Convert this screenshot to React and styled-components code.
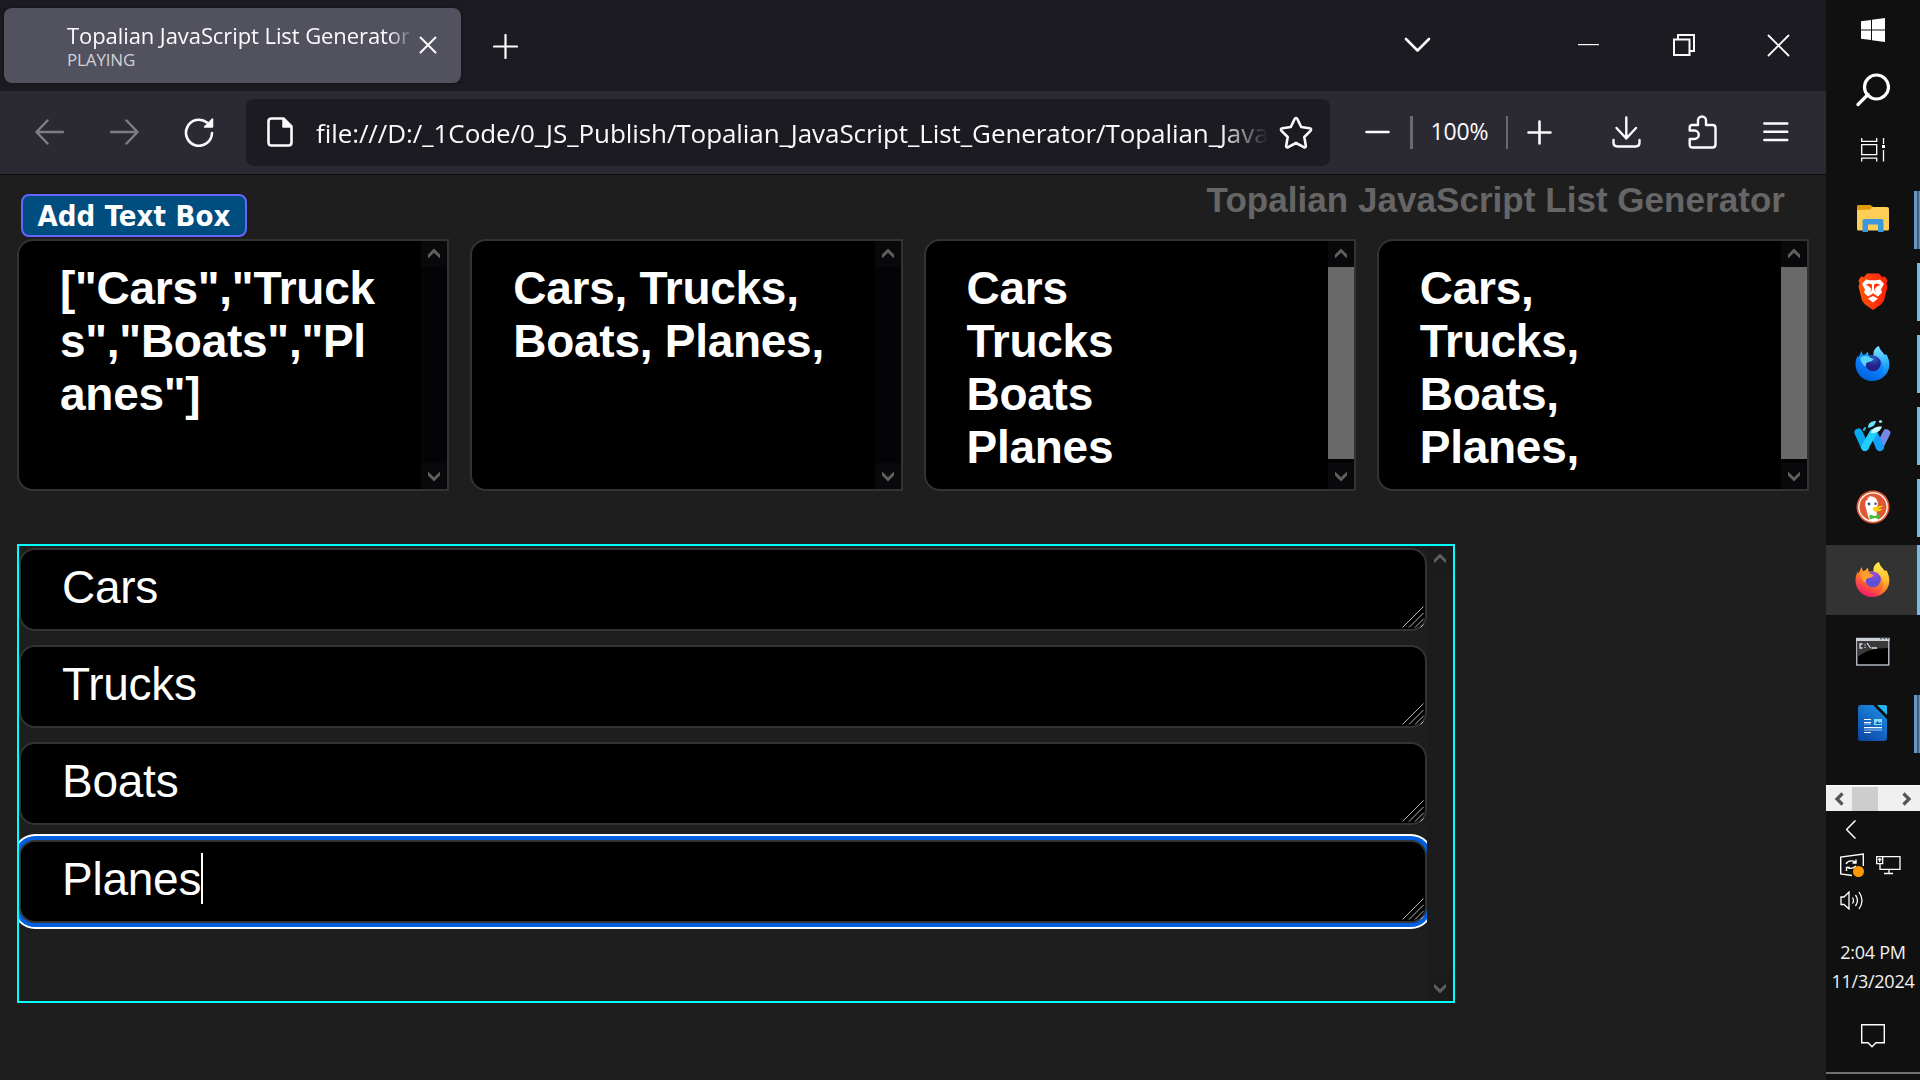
import React from "react";
import styled, { createGlobalStyle, css } from "styled-components";

const Global = createGlobalStyle`
  * { box-sizing: border-box; }
  body { margin: 0; background: #1e1e1e; overflow: hidden; }
  svg { display: block; flex: none; }
`;
const ui = `"Open Sans", "Noto Sans", sans-serif`;
const arial = `"Liberation Sans", Arial, sans-serif`;

const Screen = styled.div`display: flex; width: 1920px; height: 1080px; overflow: hidden; background: #1e1e1e;`;
const Browser = styled.div`width: 1826px; display: flex; flex-direction: column;`;

const TabStrip = styled.div`height: 91px; background: #1c1b22; display: flex; align-items: flex-start; padding: 8px 0 0 4px;`;
const Tab = styled.div`
  width: 457px; height: 75px; border-radius: 8px; background: #52525e; display: flex; padding-left: 63px;
  box-shadow: 0 0 4px rgba(0, 0, 0, 0.5);
`;
const TabLabels = styled.div`width: 347px; padding-top: 13px; overflow: hidden;`;
const TabTitle = styled.div`
  font: 22px/28px ${ui}; letter-spacing: -0.08px; color: #fbfbfe; white-space: nowrap;
  mask-image: linear-gradient(to right, #000 322px, transparent 346px);
`;
const TabStatus = styled.div`padding-top: 1px; font: 17px/20px ${ui}; letter-spacing: -0.15px; color: #d0d0d6;`;
const TabClose = styled.div`padding: 28px 0 0 5px;`;
const NewTab = styled.div`padding: 26px 0 0 32px;`;
const WindowButtons = styled.div`
  margin-left: auto; height: 75px; display: flex; align-items: center; padding: 0 36px 1px 0;
`;
const Gap = styled.div`width: ${(p) => p.$w}px; flex: none;`;

const Toolbar = styled.div`
  height: 84px; background: #2b2a33; border-bottom: 1px solid #0c0c0d; display: flex; align-items: center; padding: 0 0 1px 35px;
`;
const UrlBar = styled.div`
  width: 1084px; height: 67px; border-radius: 8px; background: #1c1b22; display: flex; align-items: center; padding-left: 21px;
`;
const Url = styled.div`
  width: 951px; margin-left: 23px; padding-top: 1px; font: 26px/40px ${ui}; letter-spacing: -0.08px; color: #fbfbfe; white-space: nowrap;
  mask-image: linear-gradient(to right, #000 905px, transparent 952px);
`;
const Divider = styled.div`width: ${(p) => p.$w || 2}px; height: 33px; background: #6a6972;`;
const ZoomLevel = styled.div`width: 93px; margin-top: -2px; text-align: center; font: 23px/33px ${ui}; letter-spacing: -0.1px; color: #fbfbfe;`;

const Page = styled.div`flex: 1; padding: 0 17px; background: #1e1e1e;`;
const PageHead = styled.div`height: 64px; display: flex; justify-content: space-between; align-items: flex-start; padding: 19px 24px 0 4px;`;
const AddButton = styled.div`
  width: 226px; height: 43px; border: 2px solid #6464ff; border-radius: 8px; background: #004d80; color: #fff;
  text-align: center; font: bold 29px/41px "DejaVu Sans Condensed", "DejaVu Sans", sans-serif; letter-spacing: 0.15px; white-space: nowrap;
`;
const Heading = styled.div`margin-top: -14px; font: bold 35px/40px ${arial}; letter-spacing: 0.04px; color: #666; white-space: nowrap;`;

const Outputs = styled.div`display: grid; grid-template-columns: repeat(4, 1fr); gap: 21px;`;
const Output = styled.div`
  height: 252px; border: 2px solid #333; border-radius: 16px 0 0 16px; background: #000; display: flex; overflow: hidden;
`;
const OutputText = styled.div`
  flex: 1; min-width: 0; padding: 21px 42px 0 41px; font: bold 46px/53px ${arial}; letter-spacing: -0.27px; color: #fff; white-space: pre-wrap;
  overflow-wrap: anywhere;
`;
const Bar = styled.div`
  width: 26px; flex: none; display: flex; flex-direction: column; justify-content: space-between;
  background: ${(p) => (p.$page ? "#1c1c1f" : "#040406")};
`;
const BarButton = styled.div`
  height: 26px; display: flex; align-items: center; justify-content: center;
  background: ${(p) => (p.$page ? "#1b1b1e" : "#09090b")};
`;
const BarThumb = styled.div`flex: 1; background: #696969; margin-bottom: 4px;`;

const List = styled.div`
  width: 1438px; height: 459px; margin-top: 53px; border: 2px solid #00ffff; display: flex; overflow: hidden;
`;
const Rows = styled.div`flex: 1; overflow: hidden; padding: 2px 0 0 0; display: flex; flex-direction: column; gap: 14.2px;`;
const Row = styled.div`
  height: 83px; flex: none; border: 2px solid #333; border-radius: 16px; background: #000; display: flex; align-items: flex-start;
  padding: 11px 1px 1px 41px; font: 46px/53px ${arial}; letter-spacing: -0.25px; color: #fff;
  ${(p) => p.$focus && css`box-shadow: 0 0 0 4px #0060df, 0 0 0 6px #fff;`}
`;
const Caret = styled.div`width: 2px; height: 51px; background: #fff;`;
const Grip = styled.div`margin-left: auto; align-self: flex-end;`;

const Taskbar = styled.div`width: 94px; height: 1080px; background: #101010; display: flex; flex-direction: column;`;
const SystemSlot = styled.div`
  height: 60px; display: flex; align-items: center; justify-content: center;
`;
const Apps = styled.div`margin-top: 4px;`;
const AppSlot = styled.div`
  height: ${(p) => (p.$active ? 70 : 72)}px; margin: ${(p) => (p.$active ? "1px 0" : "0")};
  display: grid; grid-template-columns: 1fr 6px; align-items: center; background: ${(p) => (p.$active ? "#333" : "transparent")};
`;
const AppIcon = styled.div`display: flex; justify-content: center; padding: 0 0 2px 5px;`;
const Marker = styled.div`
  height: ${(p) => (p.$active ? 70 : 58)}px; width: ${(p) => (p.$multi ? 6 : 3)}px; justify-self: end;
  background: ${(p) => (p.$multi ? "linear-gradient(to right, #6497c2 3px, #3f5f7c 3px, #3f5f7c 5px, #6497c2 5px)" : "#76b9ed")};
`;
const TrayScroll = styled.div`
  margin-top: 25px; height: 26px; background: #f0f0f0; border-top: 1px solid #fff; display: grid;
  grid-template-columns: 26px 26px 1fr 26px; align-items: center; justify-items: center;
`;
const TrayThumb = styled.div`width: 26px; height: 24px; background: #cdcdcd;`;
const Tray = styled.div`display: flex; flex-direction: column; align-items: flex-start; padding-left: 14px;`;
const TrayRow = styled.div`display: flex; gap: 12px; align-items: center; height: 24px; margin-top: ${(p) => p.$mt}px; padding-left: ${(p) => p.$pl || 0}px;`;
const Clock = styled.div`
  margin-top: 26px; display: flex; flex-direction: column; align-items: center; font: 18px/29px ${ui}; letter-spacing: -0.25px; color: #f2f2f2; white-space: nowrap;
`;
const Notice = styled.div`display: flex; justify-content: center; margin-top: 28px;`;
const Desktop = styled.div`margin-top: auto; height: 8px; border-top: 2px solid #707070;`;

function Line({ w, h, d, sw = 2, c = "#fbfbfe", cap = "round", children }) {
  return (
    <svg width={w} height={h} viewBox={`0 0 ${w} ${h}`} fill="none" stroke={c} strokeWidth={sw} strokeLinecap={cap} strokeLinejoin={cap === "round" ? "round" : "miter"}>
      <path d={d} />
      {children}
    </svg>
  );
}

function Arrow({ down, c = "#5f5f5f" }) {
  return (
    <svg width="14" height="12" viewBox="0 0 14 12">
      <path d={down ? "M1 1.5v4L7 11.5l6-6v-4L7 7.2z" : "M1 10.5v-4L7 .5l6 6v4L7 4.8z"} fill={c} />
    </svg>
  );
}

function Scrollbar({ page, thumb }) {
  return (
    <Bar $page={page}>
      <BarButton $page={page}><Arrow /></BarButton>
      {thumb && <BarThumb />}
      <BarButton $page={page}><Arrow down /></BarButton>
    </Bar>
  );
}

function Explorer() {
  return (
    <svg width="32" height="28" viewBox="0 0 32 28">
      <path d="M0 2q0-2 2-2h11l3 2h14q2 0 2 2v20q0 1.500-1.500 1.500h-29q-1.500 0-1.500-1.500z" fill="#fecf57" />
      <path d="M0 5V2q0-2 2-2h11l2.500 2-2 2.500z" fill="#e09b09" />
      <path d="M5.500 27V16q0-2 2-2h17q2 0 2 2v11h-5.500v-7.500h-10V27z" fill="#3a96dd" />
    </svg>
  );
}

function Brave() {
  return (
    <svg width="32" height="37" viewBox="0 0 32 37">
      <defs>
        <linearGradient id="brave"><stop offset="0" stopColor="#ff5500" /><stop offset="0.5" stopColor="#ff3810" /><stop offset="1" stopColor="#ff2000" /></linearGradient>
      </defs>
      <path d="M10 .5h12l3 3.500 3-.5 2.500 4-1 3 1 3-3.500 14-3 4-8 5.500-8-5.500-3-4L1.500 13.500l1-3-1-3 2.500-4 3 .5z" fill="url(#brave)" />
      <path d="M5 11l4-4.500 4 .8h6l4-.8 4 4.500-3 5.500 1 3-4 4-4-2.500-1-1 2.500-1.500-.5-3 2.500-2.500 3-1-3.500-1.500-3 1v3.500l1 4-2 1-2-1 1-4V11.500l-3-1L8.500 12l3 1 2.500 2.500-.5 3L16 20l-1 1-4 2.500-4-4 1-3z" fill="#fff" />
      <path d="M11 25.500l5-2.500 5 2.500-5 4z" fill="#fff" />
    </svg>
  );
}

function Fox({ dev }) {
  const k = dev ? "d" : "f";
  const body = dev ? ["#35c4ff", "#0a84ff", "#0060d8"] : ["#ffd83a", "#ff7c22", "#f5156c"];
  return (
    <svg width="35" height="36" viewBox="0 0 35 36">
      <defs>
        <linearGradient id={`body-${k}`} x1="0.8" y1="0" x2="0.3" y2="1">
          <stop offset="0.1" stopColor={body[0]} /><stop offset="0.55" stopColor={body[1]} /><stop offset="1" stopColor={body[2]} />
        </linearGradient>
        <linearGradient id={`tail-${k}`} x1="0.5" y1="0" x2="0.5" y2="1">
          <stop offset="0" stopColor={dev ? "#83eaff" : "#fff04a"} /><stop offset="0.6" stopColor={dev ? "#20a6f5" : "#ffb82e"} /><stop offset="1" stopColor={dev ? "#0878e8" : "#ff6a2a"} />
        </linearGradient>
        <radialGradient id={`globe-${k}`} cx="0.55" cy="0.2">
          <stop offset="0" stopColor={dev ? "#3156c8" : "#a648e8"} /><stop offset="1" stopColor={dev ? "#23208a" : "#5a50d8"} />
        </radialGradient>
      </defs>
      <path d="M6.500 6l1.500 4 2-.5 3-3 .5 4h8L22.500 3 24 1c1 4 3 5 5 8l1.500 1.500.7-1.500C35 16 35.500 22 32 28c-3 5-9 8-15 8C8 36 .5 28.500.5 19.500c0-4 1-7 2.500-9l.5 2z" fill={`url(#body-${k})`} />
      <path d="M23.500 1c.5 4 4 6 6 9.500l1.500-1C35 16 35 22 31 28c-2 3-5 5-8 5 4-3 6-8 5-13s-4-7-9.500-9.500C18 6 20 3 23.500 1z" fill={`url(#tail-${k})`} />
      <circle cx="18" cy="18.500" r="7.800" fill={`url(#globe-${k})`} />
      <path d="M5 13c4-3 8-2 10-.5l3.500 1.500c-1 2.500-3 2.500-5 3-2 .5-3 2-2.500 4.500-3-1-5-4-6-8.500z" fill={dev ? "#56d3fa" : "#ff9e2c"} />
    </svg>
  );
}

function Waterfox() {
  return (
    <svg width="37" height="33" viewBox="0 0 37 33" fill="none" strokeLinecap="round" strokeLinejoin="round">
      <path d="M25.500 28L32.500 14" stroke="#7488e8" strokeWidth="7.500" />
      <path d="M4.500 13.500L11 28" stroke="#08a8f0" strokeWidth="8" />
      <path d="M19.500 14L26 28" stroke="#12a0fa" strokeWidth="8" />
      <path d="M11 28L19 14" stroke="#20d0fb" strokeWidth="7.500" />
      <path d="M14 9c0-5 3-7 8-7-1 4-3 6-8 7z" fill="#6ce4f8" />
      <path d="M17 14c1-5 5-7 11-6.500-1 4-5 7-11 6.500z" fill="#c8fbff" />
      <circle cx="26.500" cy="2.500" r="1.600" fill="#80e8f8" />
      <path d="M9 12c0-3 1-4 3-4 0 2-1 4-3 4z" fill="#23c7f0" />
    </svg>
  );
}

function Duck() {
  return (
    <svg width="34" height="34" viewBox="0 0 34 34">
      <circle cx="17" cy="17" r="16.500" fill="#de5833" />
      <circle cx="17" cy="17" r="14.200" fill="#de5833" stroke="#fff" strokeWidth="1.300" />
      <path d="M13.500 31L9.500 16.500c-1-4 .5-6.500 3-7.500L11 7.500l3-.3-1-1c5-.5 9 2.300 9 8.300L20 19l2 11.500q-4.500 1.500-8.500.5z" fill="#fff" />
      <circle cx="13" cy="14" r="1.400" fill="#2d4f8e" /><circle cx="19.500" cy="13.700" r="1.200" fill="#2d4f8e" />
      <path d="M16.500 18c3-2 6-1.500 10.500-2.500-1 2-4 3-6 3.500h5.500c-2 2.500-6 3-9 2z" fill="#fdd20a" />
      <path d="M13.500 24.500l5 1.500 5-2v5l-5-1-5 1.500z" fill="#4cba3c" />
    </svg>
  );
}

function Console() {
  return (
    <svg width="34" height="29" viewBox="0 0 34 29">
      <rect x="0.750" y="1.500" width="32" height="26.500" fill="#000" stroke="#aeb4bd" strokeWidth="1.500" />
      <path d="M1.500 4h30.500v7C18 11 9 14 1.500 20z" fill="#3a3a3a" />
      <path d="M0 1h33.500v3H0z" fill="#cdd2d9" />
      <path d="M24 1.500h2m1.500 0h2m1.500 0h1.500" stroke="#4c5a80" strokeWidth="1.500" />
      <path d="M6.500 7H4v4h2.500M9 7.500v1m0 1.500v1M11 6l3.500 5M15.500 11H21" stroke="#ddd" strokeWidth="1.300" fill="none" />
    </svg>
  );
}

function Writer() {
  return (
    <svg width="29" height="36" viewBox="0 0 29 36">
      <defs><linearGradient id="writer" x1="0.8" y1="0" x2="0.2" y2="1"><stop offset="0" stopColor="#1b8fe0" /><stop offset="1" stopColor="#0d47a8" /></linearGradient></defs>
      <path d="M3 0h12l14 14v19q0 3-3 3H3q-3 0-3-3V3q0-3 3-3z" fill="url(#writer)" />
      <path d="M19 0h8q2 0 2 2v8z" fill="#22b8f5" />
      <path d="M6 14.500h7M6 17.500h7M6 22.700h18M6 27.500h7" stroke="#fff" strokeWidth="1.200" />
      <path d="M6 19h7M6 25h18" stroke="#9cc6ee" strokeWidth="1.200" />
      <rect x="16" y="14" width="8" height="6" fill="#8edcfb" />
      <path d="M17 19l2.500-3 2 2 1-1 1.500 2z" fill="#1565c0" />
    </svg>
  );
}

const apps = [
  { icon: <Explorer />, multi: true },
  { icon: <Brave />, open: true },
  { icon: <Fox dev />, open: true },
  { icon: <Waterfox />, open: true },
  { icon: <Duck />, open: true },
  { icon: <Fox />, active: true },
  { icon: <Console /> },
  { icon: <Writer />, multi: true },
];

const outputs = [
  { text: '["Cars","Trucks","Boats","Planes"]' },
  { text: "Cars, Trucks, Boats, Planes," },
  { text: "Cars\nTrucks\nBoats\nPlanes", thumb: true },
  { text: "Cars,\nTrucks,\nBoats,\nPlanes,", thumb: true },
];

const items = ["Cars", "Trucks", "Boats", "Planes"];

export default function App() {
  return (
    <Screen>
      <Global />
      <Browser>
        <TabStrip>
          <Tab>
            <TabLabels>
              <TabTitle>Topalian JavaScript List Generator</TabTitle>
              <TabStatus>PLAYING</TabStatus>
            </TabLabels>
            <TabClose><Line w={18} h={18} d="M1.500 1.500l15 15m0-15l-15 15" /></TabClose>
          </Tab>
          <NewTab><Line w={25} h={25} sw={2.2} d="M12.500 1v23M1 12.500h23" /></NewTab>
          <WindowButtons>
            <Line w={27} h={16} sw={2.6} d="M2 2l11.500 11.500L25 2" />
            <Gap $w={147} />
            <Line w={21} h={3} sw={1.2} cap="butt" d="M0 .6h21" />
            <Gap $w={74} />
            <Line w={22} h={22} sw={2} cap="butt" d="M1 5.500h15.500V21H1zM5 5V1h16v16h-4" />
            <Gap $w={72} />
            <Line w={23} h={23} sw={1.800} d="M1.500 1.500l20 20m0-20l-20 20" />
          </WindowButtons>
        </TabStrip>
        <Toolbar>
          <Line w={29} h={26} sw={2.5} c="#7d7c84" d="M12.500 1.500L1.500 13l11 11.500M2 13h26" />
          <Gap $w={46} />
          <Line w={29} h={26} sw={2.5} c="#7d7c84" d="M16.500 1.500l11 11.500-11 11.500M27 13H1" />
          <Gap $w={45} />
          <Line w={30} h={30} sw={2.6} d="M28 16a13 13 0 1 1-5-10.500"><path d="M28.500 2v8h-8z" fill="#fbfbfe" stroke="#fbfbfe" strokeWidth="1.500" /></Line>
          <Gap $w={32} />
          <UrlBar>
            <Line w={26} h={30} sw={2.6} d="M4.500 1.500h12l8 8v16q0 3-3 3h-17q-3 0-3-3v-21q0-3 3-3z"><path d="M16 2v8h8z" fill="#fbfbfe" strokeWidth="1.500" /></Line>
            <Url>file:///D:/_1Code/0_JS_Publish/Topalian_JavaScript_List_Generator/Topalian_Java</Url>
            <Gap $w={12} />
            <Line w={34} h={33} sw={2.6} d="M17 2q1 0 1.500 1.200l3.700 7.800 8.300 1.300q2.500.5 1 2.500l-6.200 6.200 1.500 8.700q.2 2.500-2 1.500L17 27l-7.800 4.200q-2.200 1-2-1.500L8.700 21 2.500 14.800q-1.500-2 1-2.500L11.800 11l3.700-7.800Q16 2 17 2z" />
          </UrlBar>
          <Gap $w={35} />
          <Line w={25} h={4} sw={2.6} d="M1.500 2h22" />
          <Gap $w={20} />
          <Divider $w={3} />
          <ZoomLevel>100%</ZoomLevel>
          <Divider />
          <Gap $w={19} />
          <Line w={25} h={25} sw={2.6} d="M12.500 1.500v22M1.500 12.500h22" />
          <Gap $w={60} />
          <Line w={29} h={32} sw={2.4} d="M14.300 1.500v21M4.500 12l9.800 10.500L24 12M1.500 24v2.500q0 4 4 4h18q4 0 4-4V24" />
          <Gap $w={47} />
          <Line w={29} h={34} sw={2.4} d="M1.700 15.500v-3q0-2.500 2.500-2.500H10V5.500a4 4 0 0 1 8 0V10h6.500q3 0 3 3v16.500q0 3-3 3H4.700q-3 0-3-3V24H6.500a4.200 4.200 0 0 0 0-8.500z" />
          <Gap $w={46} />
          <Line w={26} h={20} sw={2.4} d="M1.300 1.500h23m-23 8.300h23m-23 8.200h23" />
        </Toolbar>
        <Page>
          <PageHead>
            <AddButton>Add Text Box</AddButton>
            <Heading>Topalian JavaScript List Generator</Heading>
          </PageHead>
          <Outputs>
            {outputs.map((o) => (
              <Output key={o.text}>
                <OutputText>{o.text}</OutputText>
                <Scrollbar thumb={o.thumb} />
              </Output>
            ))}
          </Outputs>
          <List>
            <Rows>
              {items.map((t) => (
                <Row key={t} $focus={t === "Planes"}>
                  {t}
                  {t === "Planes" && <Caret />}
                  <Grip><Line w={22} h={22} sw={1} c="#b5b5b5" cap="butt" d="M.5 21.500l21-21M7 21.500L21.500 7M13 21.500l8.500-8.500M18.500 21.500l3-3" /></Grip>
                </Row>
              ))}
            </Rows>
            <Scrollbar page />
          </List>
        </Page>
      </Browser>
      <Taskbar>
        <SystemSlot>
          <svg width="24" height="24" viewBox="0 0 24 24" fill="#fff"><path d="M0 3.300L10 2v9.500H0zM11 1.800L24 0v11.500H11zM0 12.500h10V22L0 20.700zM11 12.500h13V24l-13-1.800z" /></svg>
        </SystemSlot>
        <SystemSlot>
          <Line w={34} h={34} sw={3.2} c="#fff" d="M12 21.500L2 31.500"><circle cx="20.500" cy="14" r="12" /></Line>
        </SystemSlot>
        <SystemSlot>
          <Line w={24} h={24} sw={1.300} cap="butt" c="#fff" d="M.7 0v3.300h15V0M.7 6.700h15v10H.7zM.7 23.500v-3.300h15v3.300M22.500 0v6M22.500 12v11.500"><path d="M21 8.500h3" strokeWidth="3" /></Line>
        </SystemSlot>
        <Apps>
          {apps.map((a, i) => (
            <AppSlot key={i} $active={a.active}>
              <AppIcon>{a.icon}</AppIcon>
              {(a.open || a.active || a.multi) && <Marker $active={a.active} $multi={a.multi} />}
            </AppSlot>
          ))}
        </Apps>
        <TrayScroll>
          <Line w={10} h={14} sw={3.2} cap="butt" c="#555" d="M8.500 1.500L3 7l5.500 5.500" />
          <TrayThumb />
          <span />
          <Line w={10} h={14} sw={3.2} cap="butt" c="#555" d="M1.500 1.500L7 7l-5.500 5.500" />
        </TrayScroll>
        <Tray>
          <TrayRow $mt={6} $pl={6}><Line w={10} h={19} sw={1.500} c="#fff" cap="butt" d="M9.500.5l-9 9 9 9" /></TrayRow>
          <TrayRow $mt={12}>
            <Line w={24} h={24} sw={1.400} c="#fff" cap="butt" d="M12 22.500L.7 21V4L23.300 1v12M6 11c2-4 8-4 10-1m0-3.500V10h-3.500M16 13c-3 3-7 3-9 1m-.5 4v-3.500H10">
              <circle cx="18.500" cy="18.500" r="5.500" fill="#ff9800" stroke="none" />
            </Line>
            <Line w={25} h={20} sw={1.300} c="#fff" cap="butt" d="M7 1.700h17v12.600H4V9M.7 1.700h6v7h-6zM3.700 3v4M2 4.500h3.500M13 14.500v4M8 18.500h9" />
          </TrayRow>
          <TrayRow $mt={11}><Line w={24} h={19} sw={1.300} c="#fff" cap="butt" d="M1 6h3l5-5v17l-5-4.500H1zM12.500 6.500q2 3 0 6M15.500 4q4 5.500 0 11M19 1q6 8.500 0 17" /></TrayRow>
        </Tray>
        <Clock><span>2:04 PM</span><span>11/3/2024</span></Clock>
        <Notice><Line w={24} h={24} sw={1.400} c="#fff" cap="butt" d="M.7.7h22.600v18H15l-4 4-4-4H.7z" /></Notice>
        <Desktop />
      </Taskbar>
    </Screen>
  );
}
